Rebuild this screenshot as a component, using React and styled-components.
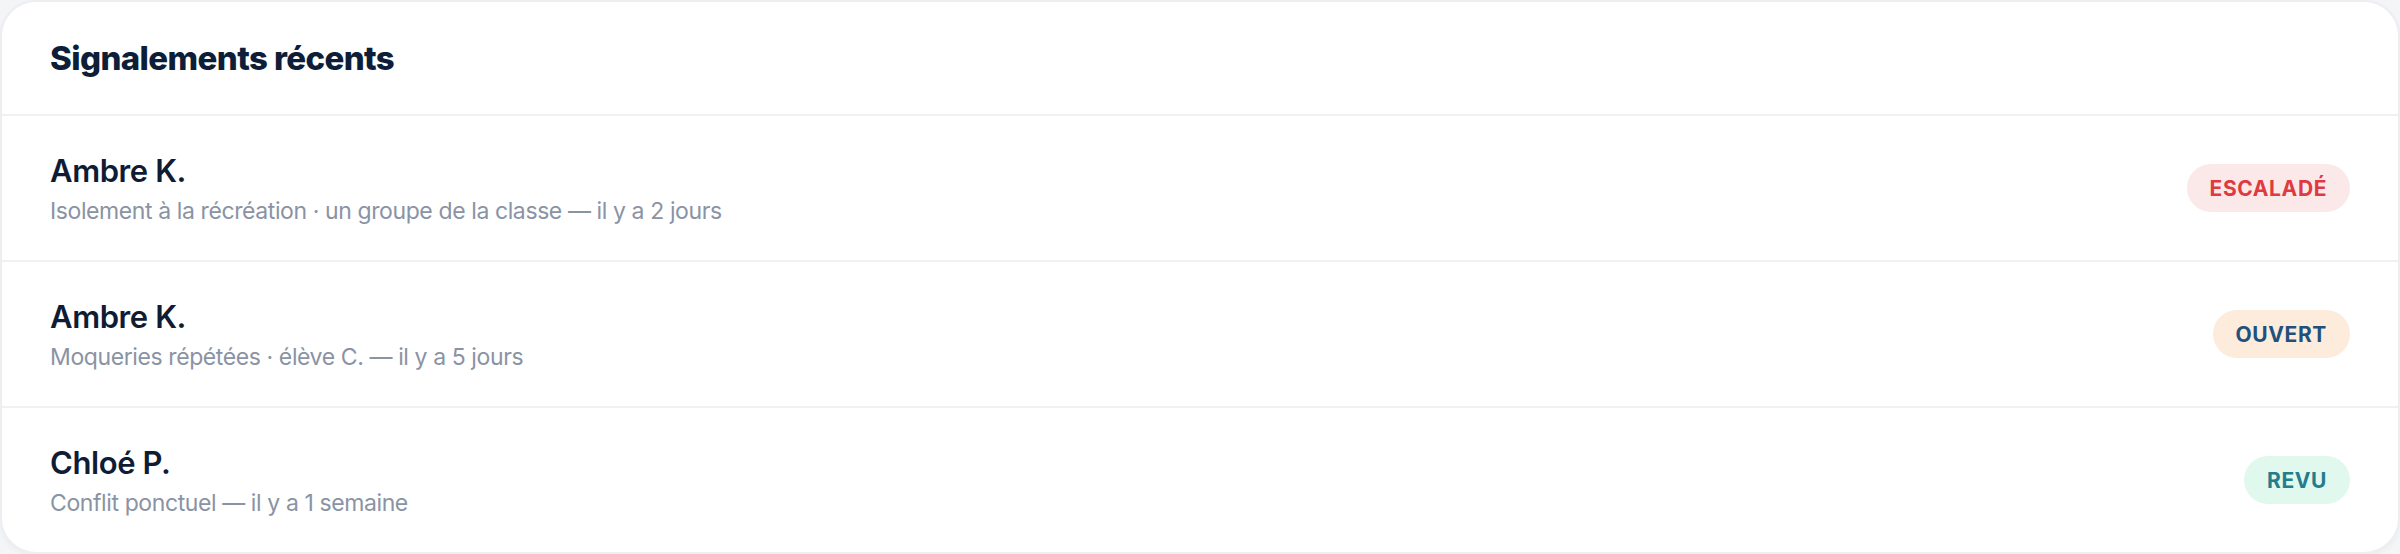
import React from 'react';
import styled, { createGlobalStyle } from 'styled-components';

const GlobalStyle = createGlobalStyle`
  html, body {
    margin: 0;
    padding: 0;
    background: #f4f5f7;
    font-family: Inter, "Noto Sans", sans-serif;
  }
`;

const reports = [
  { name: 'Ambre K.', detail: 'Isolement à la récréation · un groupe de la classe — il y a 2 jours', status: 'escalated' },
  { name: 'Ambre K.', detail: 'Moqueries répétées · élève C. — il y a 5 jours', status: 'open' },
  { name: 'Chloé P.', detail: 'Conflit ponctuel — il y a 1 semaine', status: 'reviewed' },
];

const statusStyles = {
  escalated: { label: 'Escaladé', bg: '#fbe9ea', fg: '#df3a40' },
  open: { label: 'Ouvert', bg: '#fdebdc', fg: '#22507c' },
  reviewed: { label: 'Revu', bg: '#e1f8ee', fg: '#237d8d' },
};

const App = () => {
  return (
    <>
      <GlobalStyle />
      <Card>
        <Header>
          <Title>Signalements récents</Title>
        </Header>
        {reports.map((r, i) => (
          <Row key={i}>
            <Info>
              <Name>{r.name}</Name>
              <Detail>{r.detail}</Detail>
            </Info>
            <Badge $bg={statusStyles[r.status].bg} $fg={statusStyles[r.status].fg}>
              {statusStyles[r.status].label}
            </Badge>
          </Row>
        ))}
      </Card>
    </>
  );
};

const Card = styled.section`
  background: #ffffff;
  border: 2px solid #eceef1;
  border-radius: 36px;
  overflow: hidden;
  box-shadow: 0 2px 6px rgba(20, 30, 60, 0.04);
`;

const Header = styled.div`
  height: 112px;
  display: flex;
  align-items: center;
  padding: 0 48px;
  border-bottom: 2px solid #f0f1f3;
`;

const Title = styled.h2`
  margin: 0;
  font-size: 33px;
  font-weight: 800;
  letter-spacing: -0.6px;
  color: #0e1e38;
`;

const Row = styled.div`
  height: 144px;
  display: flex;
  align-items: center;
  justify-content: space-between;
  padding: 0 48px;
  border-bottom: 2px solid #f0f1f3;
  &:last-child {
    border-bottom: none;
  }
`;

const Info = styled.div`
  display: flex;
  flex-direction: column;
  gap: 8px;
`;

const Name = styled.div`
  font-size: 31px;
  font-weight: 600;
  letter-spacing: -0.4px;
  color: #0f1c34;
`;

const Detail = styled.div`
  font-size: 23px;
  font-weight: 400;
  letter-spacing: -0.4px;
  color: #8a93a4;
`;

const Badge = styled.span`
  display: inline-flex;
  align-items: center;
  height: 48px;
  padding: 0 23px;
  border-radius: 24px;
  background: ${(p) => p.$bg};
  color: ${(p) => p.$fg};
  font-size: 21px;
  font-weight: 700;
  letter-spacing: 0.6px;
  text-transform: uppercase;
`;

export default App;
